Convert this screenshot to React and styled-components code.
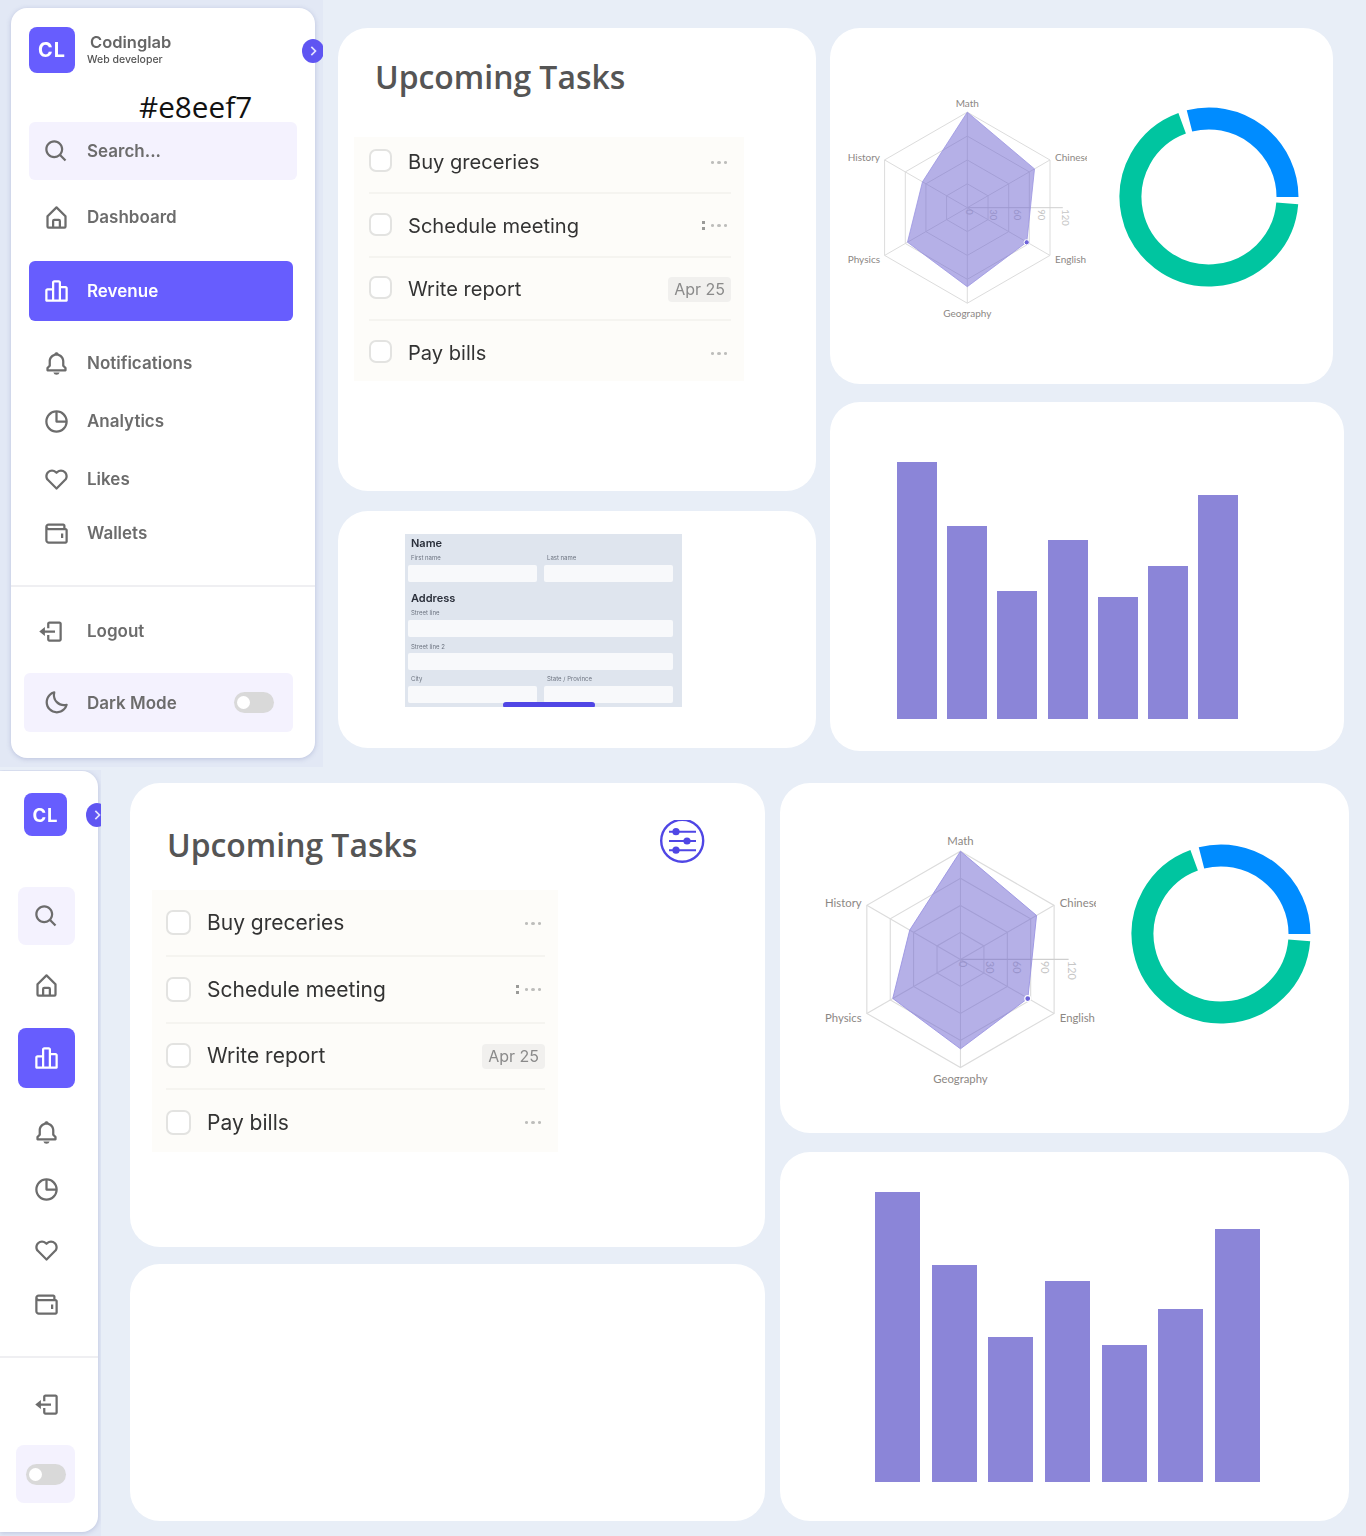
import React from 'react'
import styled, { createGlobalStyle, css } from 'styled-components'
import {
  BiSearch, BiHomeAlt, BiBarChartAlt2, BiBell, BiPieChartAlt, BiHeart, BiWallet, BiLogOut, BiMoon, BiChevronRight,
} from 'react-icons/bi'

const GlobalStyle = createGlobalStyle`
  html, body { margin: 0; padding: 0; }
  body { background: #e8eef7; font-family: "Inter", "Liberation Sans", sans-serif; }
  * { box-sizing: border-box; }
`

const ACCENT = '#675dfe'

// the sidebars and the task lists are soft in the picture, the note on top is not
const soft = css`
  filter: blur(0.55px);
`

const Page = styled.div`
  width: 1366px;
  height: 1536px;
  background: #e8eef7;
  overflow: hidden;
`

const TopRow = styled.section`
  display: flex;
  height: 770px;
`

const BottomRow = styled.section`
  display: flex;
  height: 766px;
`

const SidePanel = styled.div`
  position: relative;
  flex: none;
  width: 323px;
  height: 767px;
  padding: 8px 0 0 11px;
  background: #e2e8f5;
  overflow: hidden;
`

const RailPanel = styled.div`
  position: relative;
  flex: none;
  width: 101px;
  height: 766px;
  padding-top: 1px;
  background: #e2e8f5;
  overflow: hidden;
`

const Sidebar = styled.aside`
  display: flow-root;
  width: ${(p) => p.$w}px;
  height: ${(p) => p.$h}px;
  background: #fff;
  border-radius: ${(p) => (p.$rail ? '0 16px 16px 0' : '16px')};
  box-shadow: 0 1px 5px rgba(95, 105, 170, 0.3);
`

const Brand = styled.div`
  ${soft}
  display: flex;
  align-items: flex-start;
  height: 46px;
  margin: ${(p) => p.$m};
  gap: 15px;
`

const Logo = styled.div`
  display: flex;
  align-items: center;
  justify-content: center;
  width: ${(p) => p.$size}px;
  height: ${(p) => p.$size}px;
  flex: none;
  border-radius: 8px;
  background: ${ACCENT};
  color: #fff;
  font-size: ${(p) => p.$size * 0.43}px;
  font-weight: 700;
  letter-spacing: 1px;
`

const BrandText = styled.div`
  display: flex;
  flex-direction: column;
  gap: 2px;
  padding-top: 6px;
`

const BrandName = styled.span`
  color: #666;
  font-size: 16.5px;
  font-weight: 600;
  line-height: 18px;
`

const BrandRole = styled.span`
  margin-left: -3px;
  color: #555;
  font-size: 10.5px;
  font-weight: 500;
  line-height: 13px;
`

const HexNote = styled.div`
  height: 49px;
  margin-left: 128px;
  padding-top: 9px;
  color: #111;
  font-family: "Open Sans", sans-serif;
  font-size: 29.7px;
  line-height: 49px;
`

const NavItem = styled.div`
  ${soft}
  display: flex;
  align-items: center;
  justify-content: ${(p) => (p.$rail ? 'center' : 'flex-start')};
  width: ${(p) => p.$w}px;
  height: ${(p) => p.$h || 54}px;
  margin-top: ${(p) => p.$mt || 0}px;
  margin-left: ${(p) => p.$ml}px;
  padding-left: ${(p) => (p.$rail ? 0 : p.$pl ?? 14)}px;
  gap: ${(p) => p.$gap ?? 17}px;
  border-radius: ${(p) => (p.$rail ? 8 : 6)}px;
  background: ${(p) => (p.$active ? ACCENT : p.$soft ? '#f4f2fe' : 'transparent')};
  color: ${(p) => (p.$active ? '#fff' : '#6c6c6c')};
  font-size: 17px;
  font-weight: 600;
  svg { flex: none; font-size: 27px; }
`

const Divider = styled.div`
  height: 2px;
  margin-top: ${(p) => p.$mt}px;
  background: #efeff2;
`

const Toggle = styled.div`
  position: relative;
  flex: none;
  width: 40px;
  height: 21px;
  margin: ${(p) => (p.$push ? '0 19px 0 auto' : 0)};
  border-radius: 11px;
  background: #d9d9d9;
  &::after {
    content: "";
    position: absolute;
    top: 4px;
    left: 3px;
    width: 13px;
    height: 13px;
    border-radius: 50%;
    background: #fff;
  }
`

const CollapseBtn = styled.div`
  ${soft}
  position: absolute;
  left: ${(p) => p.$x}px;
  top: ${(p) => p.$y}px;
  display: flex;
  align-items: center;
  justify-content: center;
  width: 22px;
  height: 24px;
  border-radius: 50%;
  background: #5f55f2;
  color: #e4e2ff;
  font-size: 20px;
`

const Column = styled.div`
  display: flex;
  flex: none;
  flex-direction: column;
  width: ${(p) => p.$w}px;
  margin-left: ${(p) => p.$ml}px;
  padding-top: ${(p) => p.$pt}px;
  gap: ${(p) => p.$gap}px;
`

const Card = styled.div`
  width: ${(p) => p.$w || '100%'};
  height: ${(p) => p.$h}px;
  border-radius: 30px;
  background: #fff;
`

const TaskCard = styled(Card)`
  padding: ${(p) => p.$pt}px 0 0 ${(p) => p.$pl}px;
`

const TaskHead = styled.div`
  display: flex;
  align-items: flex-start;
  justify-content: space-between;
  width: ${(p) => p.$w}px;
  height: ${(p) => p.$h}px;
  padding-left: ${(p) => p.$pl}px;
`

const TaskTitle = styled.h2`
  margin: ${(p) => p.$mt || 0}px 0 0;
  color: #555;
  font-family: "Open Sans", sans-serif;
  font-size: 31.9px;
  font-weight: 600;
  line-height: 42px;
`

const TaskList = styled.ul`
  ${soft}
  width: ${(p) => p.$w}px;
  margin: ${(p) => p.$mt}px 0 0;
  padding: ${(p) => p.$pt}px 13px ${(p) => p.$pb}px ${(p) => p.$pl}px;
  list-style: none;
  background: #fdfcf9;
`

const TaskRow = styled.li`
  display: flex;
  align-items: center;
  height: ${(p) => p.$h}px;
  margin-bottom: ${(p) => p.$mb}px;
  border-bottom: 2px solid #f5f4f0;
  gap: 16px;
  &:last-child {
    height: 26px;
    margin-bottom: 0;
    border-bottom: 0;
  }
`

const TaskBody = styled.div`
  display: flex;
  flex: 1;
  align-items: center;
  justify-content: space-between;
  height: 26px;
  align-self: flex-start;
`

const CheckBox = styled.span`
  flex: none;
  align-self: flex-start;
  width: ${(p) => p.$size}px;
  height: ${(p) => p.$size}px;
  border: 2px solid #e3e3e1;
  border-radius: 7px;
  background: #fff;
`

const TaskName = styled.span`
  color: #333;
  font-size: ${(p) => p.$fs}px;
  line-height: 26px;
`

const DatePill = styled.span`
  padding: 1px 6px;
  border-radius: 4px;
  background: #f1f0ee;
  color: #8a8a8a;
  font-size: 16px;
  line-height: 23px;
`

const DotRow = styled.span`
  display: inline-flex;
  align-items: center;
  gap: 3px;
  margin-right: 4px;
`

const Dot = styled.i`
  width: 3.5px;
  height: 3px;
  border-radius: 50%;
  background: #bdbdbb;
`

const Handle = styled.i`
  width: 3px;
  height: 9px;
  margin-right: 3px;
  background: repeating-linear-gradient(#9a9a98 0 3px, transparent 3px 6px);
`

const FormCard = styled(Card)`
  padding: 23px 0 0 67px;
`

const FormShot = styled.div`
  position: relative;
  width: 277px;
  height: 173px;
  padding: 1px 9px 0 3px;
  background: #dfe5ee;
  overflow: hidden;
`

const FormInner = styled.div`
  filter: blur(0.35px);
`

const FormHeading = styled.h4`
  height: 16px;
  margin: ${(p) => p.$mt || 0}px 0 0 3px;
  color: #2a2f3a;
  font-size: 11px;
  font-weight: 600;
  line-height: 16px;
`

const FieldGrid = styled.div`
  display: grid;
  grid-template-columns: ${(p) => (p.$single ? '1fr' : '129px 129px')};
  column-gap: 7px;
  margin-top: ${(p) => p.$mt || 0}px;
`

const FieldLabel = styled.label`
  display: block;
  height: 8px;
  margin: 0 0 ${(p) => p.$mb}px 3px;
  color: #6d7480;
  font-size: 6px;
  line-height: 8px;
`

const FieldInput = styled.div`
  height: 17px;
  border-radius: 2px;
  background: #f8f9fb;
`

const ScrollBar = styled.div`
  position: absolute;
  left: 98px;
  bottom: -1px;
  width: 92px;
  height: 6px;
  border-radius: 3px;
  background: #5046e5;
`

const ChartCard = styled(Card)`
  display: flex;
  align-items: flex-start;
  padding-left: ${(p) => p.$pl}px;
`

const RadarSvg = styled.svg`
  flex: none;
  margin-top: ${(p) => p.$mt}px;
  text { font-family: "Lato", sans-serif; }
`

const DonutSvg = styled.svg`
  flex: none;
  margin-top: ${(p) => p.$mt}px;
  margin-left: ${(p) => p.$ml}px;
`

const BarCard = styled(Card)`
  display: flex;
  align-items: flex-end;
  gap: ${(p) => p.$gap}px;
  padding: 0 0 ${(p) => p.$pb}px ${(p) => p.$pl}px;
`

const Bar = styled.div`
  flex: none;
  width: ${(p) => p.$w}px;
  height: ${(p) => p.$h}px;
  background: #8b85d8;
`

const NAV_TOP = [
  { icon: BiHomeAlt, label: 'Dashboard', mt: 8, h: 58 },
  { icon: BiBarChartAlt2, label: 'Revenue', mt: 15, h: 60, active: true },
  { icon: BiBell, label: 'Notifications', mt: 15 },
  { icon: BiPieChartAlt, label: 'Analytics', mt: 4 },
  { icon: BiHeart, label: 'Likes', mt: 4 },
  { icon: BiWallet, label: 'Wallets' },
]

const NAV_RAIL = [
  { icon: BiHomeAlt, mt: 13 },
  { icon: BiBarChartAlt2, mt: 16, h: 60, active: true },
  { icon: BiBell, mt: 17 },
  { icon: BiPieChartAlt, mt: 3 },
  { icon: BiHeart, mt: 7 },
  { icon: BiWallet },
]

const TASKS = [
  { name: 'Buy greceries' },
  { name: 'Schedule meeting', handle: true },
  { name: 'Write report', date: 'Apr 25' },
  { name: 'Pay bills' },
]

const polar = (cx, cy, r, deg) => {
  const a = ((deg - 90) * Math.PI) / 180
  return [cx + r * Math.cos(a), cy + r * Math.sin(a)]
}

const hexPoints = (cx, cy, radii) =>
  radii.map((r, i) => polar(cx, cy, r, i * 60).map((n) => n.toFixed(1)).join(',')).join(' ')

const arc = (cx, cy, r, from, to) => {
  const [x1, y1] = polar(cx, cy, r, from)
  const [x2, y2] = polar(cx, cy, r, to)
  return `M${x1} ${y1}A${r} ${r} 0 ${to - from > 180 ? 1 : 0} 1 ${x2} ${y2}`
}

const Radar = ({ width, height, mt }) => {
  const cx = 122.3
  const cy = 112.7
  const R = 95.5
  const labels = [
    ['Math', cx, 11.5, 'middle'],
    ['Chinese', 210, 66, 'start'],
    ['English', 210, 168, 'start'],
    ['Geography', cx, 222, 'middle'],
    ['Physics', 35, 168, 'end'],
    ['History', 35, 66, 'end'],
  ]
  return (
    <RadarSvg width={width} height={height} viewBox="0 0 242 230" $mt={mt}>
      {[0.25, 0.5, 0.75, 1].map((k) => (
        <polygon key={k} points={hexPoints(cx, cy, Array(6).fill(R * k))} fill="none" stroke="#dcdcdc" strokeWidth="1" />
      ))}
      {[0, 60, 120, 180, 240, 300].map((deg) => {
        const [x, y] = polar(cx, cy, R, deg)
        return <line key={deg} x1={cx} y1={cy} x2={x} y2={y} stroke="#dcdcdc" strokeWidth="1" />
      })}
      <line x1={cx} y1={cy} x2={cx + R} y2={cy} stroke="#cfcfcf" strokeWidth="1" />
      {[0, 30, 60, 90, 120].map((t, i) => (
        <text
          key={t}
          transform={`translate(${cx + i * 23.9 - 1} ${cy + 1.5}) rotate(90)`}
          fontSize="9.5"
          fill="#c6c6c6"
        >
          {t}
        </text>
      ))}
      <polygon
        points={hexPoints(cx, cy, [95.5, 77.6, 68.7, 79, 69, 51.7])}
        fill="rgba(107, 98, 207, 0.5)"
        stroke="#9a94e2"
        strokeWidth="0.8"
      />
      <circle cx={cx + 59.4} cy={cy + 34.6} r="2.6" fill="#6d63d8" stroke="#fff" strokeWidth="1" />
      {labels.map(([text, x, y, anchor]) => (
        <text key={text} x={x} y={y} fontSize="10" fill="#8c8784" textAnchor={anchor}>
          {text}
        </text>
      ))}
    </RadarSvg>
  )
}

const Donut = ({ mt, ml }) => (
  <DonutSvg width="180" height="180" viewBox="0 0 180 180" $mt={mt} $ml={ml}>
    <path d={arc(90, 90, 78.5, 94.6, 340)} fill="none" stroke="#00c5a0" strokeWidth="22" />
    <path d={arc(90, 90, 78.5, -14.4, 90)} fill="none" stroke="#008cff" strokeWidth="22" />
  </DonutSvg>
)

const SlidersIcon = () => (
  <svg width="46" height="46" viewBox="0 0 46 46" fill="none" stroke="#4f46e5" strokeWidth="2">
    <circle cx="23.2" cy="20.8" r="21" strokeWidth="2.4" />
    <path d="M10 11.7h27M10 21h27M10 30.2h27" />
    <circle cx="17" cy="11.7" r="3.6" fill="#4f46e5" stroke="none" />
    <circle cx="28" cy="21" r="3.6" fill="#4f46e5" stroke="none" />
    <circle cx="17" cy="30.2" r="3.6" fill="#4f46e5" stroke="none" />
  </svg>
)

const Tasks = ({ width, mt, pt, pb, pl, rowH, rowGap, box, fs }) => (
  <TaskList $w={width} $mt={mt} $pt={pt} $pb={pb} $pl={pl}>
    {TASKS.map((task) => (
      <TaskRow key={task.name} $h={rowH} $mb={rowGap}>
        <CheckBox $size={box} />
        <TaskBody>
          <TaskName $fs={fs}>{task.name}</TaskName>
          {task.date ? (
            <DatePill>{task.date}</DatePill>
          ) : (
            <DotRow>
              {task.handle && <Handle />}
              <Dot />
              <Dot />
              <Dot />
            </DotRow>
          )}
        </TaskBody>
      </TaskRow>
    ))}
  </TaskList>
)

const AddressForm = () => (
  <FormShot>
    <FormInner>
      <FormHeading>Name</FormHeading>
      <FieldGrid $mt={3}>
        <div><FieldLabel $mb={3}>First name</FieldLabel><FieldInput /></div>
        <div><FieldLabel $mb={3}>Last name</FieldLabel><FieldInput /></div>
      </FieldGrid>
      <FormHeading $mt={8}>Address</FormHeading>
      <FieldGrid $single $mt={3}>
        <div><FieldLabel $mb={3}>Street line</FieldLabel><FieldInput /></div>
      </FieldGrid>
      <FieldGrid $single $mt={6}>
        <div><FieldLabel $mb={2}>Street line 2</FieldLabel><FieldInput /></div>
      </FieldGrid>
      <FieldGrid $mt={5}>
        <div><FieldLabel $mb={3}>City</FieldLabel><FieldInput /></div>
        <div><FieldLabel $mb={3}>State / Province</FieldLabel><FieldInput /></div>
      </FieldGrid>
    </FormInner>
    <ScrollBar />
  </FormShot>
)

const App = () => (
  <Page>
    <GlobalStyle />
    <TopRow>
      <SidePanel>
        <Sidebar $w={304} $h={750}>
          <Brand $m="19px 0 0 18px">
            <Logo $size={46}>CL</Logo>
            <BrandText>
              <BrandName>Codinglab</BrandName>
              <BrandRole>Web developer</BrandRole>
            </BrandText>
          </Brand>
          <HexNote>#e8eef7</HexNote>
          <NavItem $w={268} $h={58} $ml={18} $soft>
            <BiSearch />
            Search...
          </NavItem>
          {NAV_TOP.map(({ icon: Icon, label, mt, h, active }) => (
            <NavItem key={label} $w={264} $h={h} $ml={18} $mt={mt} $active={active}>
              <Icon />
              {label}
            </NavItem>
          ))}
          <Divider $mt={25} />
          <NavItem $w={264} $ml={18} $mt={17} $pl={8} $gap={23}>
            <BiLogOut />
            Logout
          </NavItem>
          <NavItem $w={269} $h={59} $ml={13} $mt={15} $pl={19} $soft>
            <BiMoon />
            Dark Mode
            <Toggle $push />
          </NavItem>
        </Sidebar>
        <CollapseBtn $x={302} $y={39}><BiChevronRight /></CollapseBtn>
      </SidePanel>

      <Column $w={478} $ml={15} $pt={28} $gap={20}>
        <TaskCard $h={463} $pt={28} $pl={16}>
          <TaskHead $w={390} $h={44} $pl={21}>
            <TaskTitle>Upcoming Tasks</TaskTitle>
          </TaskHead>
          <Tasks width={390} mt={37} pt={12} pb={15} pl={15} rowH={45} rowGap={18.7} box={23} fs={20.1} />
        </TaskCard>
        <FormCard $h={237}>
          <AddressForm />
        </FormCard>
      </Column>

      <Column $w={514} $ml={14} $pt={28} $gap={18}>
        <ChartCard $w="503px" $h={356} $pl={15}>
          <Radar width={242} height={230} mt={67} />
          <Donut mt={79} ml={32} />
        </ChartCard>
        <BarCard $h={349} $gap={10.2} $pl={67} $pb={32}>
          {[257, 193, 128, 179, 122, 153, 224].map((h, i) => (
            <Bar key={i} $w={40} $h={h} />
          ))}
        </BarCard>
      </Column>
    </TopRow>

    <BottomRow>
      <RailPanel>
        <Sidebar $w={98} $h={761} $rail>
          <Brand $m="22px 0 0 24px">
            <Logo $size={43}>CL</Logo>
          </Brand>
          <NavItem $rail $w={57} $h={58} $ml={18} $mt={48} $soft>
            <BiSearch />
          </NavItem>
          {NAV_RAIL.map(({ icon: Icon, mt, h, active }, i) => (
            <NavItem key={i} $rail $w={57} $h={h} $ml={18} $mt={mt} $active={active}>
              <Icon />
            </NavItem>
          ))}
          <Divider $mt={25} />
          <NavItem $rail $w={57} $ml={18} $mt={19}>
            <BiLogOut />
          </NavItem>
          <NavItem $rail $w={59} $h={58} $ml={16} $mt={14} $soft>
            <Toggle />
          </NavItem>
        </Sidebar>
        <CollapseBtn $x={86} $y={33}><BiChevronRight /></CollapseBtn>
      </RailPanel>

      <Column $w={635} $ml={29} $pt={13} $gap={17}>
        <TaskCard $h={464} $pt={37} $pl={22}>
          <TaskHead $w={553} $h={49} $pl={15}>
            <TaskTitle $mt={4}>Upcoming Tasks</TaskTitle>
            <SlidersIcon />
          </TaskHead>
          <Tasks width={406} mt={21} pt={20} pb={16} pl={14} rowH={47} rowGap={19.5} box={25} fs={21} />
        </TaskCard>
        <Card $h={257} />
      </Column>

      <Column $w={569} $ml={15} $pt={13} $gap={19}>
        <ChartCard $h={350} $pl={42}>
          <Radar width={274} height={262} mt={48} />
          <Donut mt={61} ml={35} />
        </ChartCard>
        <BarCard $h={369} $gap={11.7} $pl={95} $pb={39}>
          {[290, 217, 145, 201, 137, 173, 253].map((h, i) => (
            <Bar key={i} $w={45} $h={h} />
          ))}
        </BarCard>
      </Column>
    </BottomRow>
  </Page>
)

export default App
